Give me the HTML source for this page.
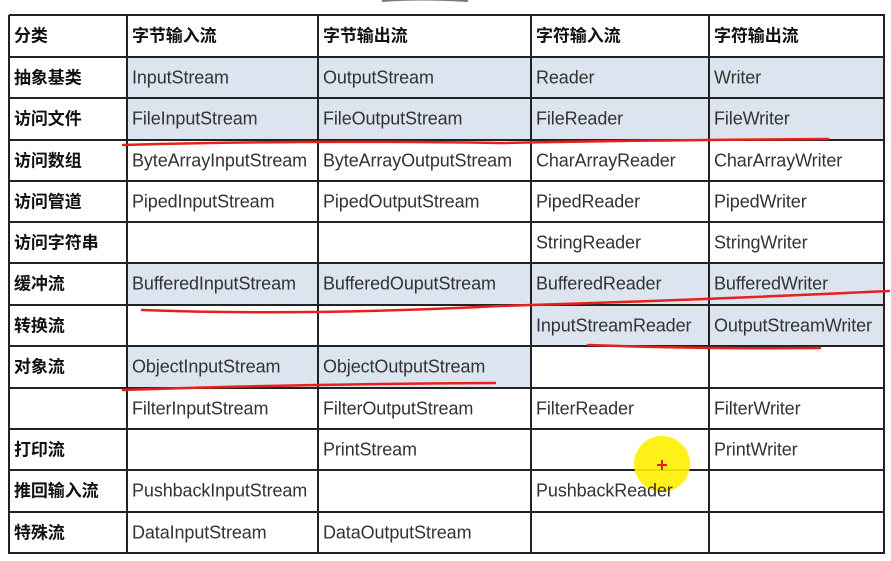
<!DOCTYPE html>
<html><head><meta charset="utf-8"><style>
body{margin:0;width:891px;height:561px;background:#fff;overflow:hidden;position:relative;font-family:"Liberation Sans","Noto Sans CJK SC",sans-serif;}
.c{position:absolute;box-sizing:border-box;font-size:18px;color:#333;padding-left:5px;white-space:nowrap;letter-spacing:-0.1px}
.c span{position:absolute;left:5px;top:50%;transform:translateY(-52%);line-height:20px}
.h{font-weight:bold;color:#111;font-size:17px}
.h span{transform:translateY(-48%)}
.b{background:#dce4ef}
.l{position:absolute;background:#222}
</style></head><body>
<div id="t"></div>
<svg style="position:absolute;left:0;top:0" width="891" height="561">
<path d="M382 1 Q420 -2 468 1" stroke="#777" stroke-width="2" fill="none"/>
</svg>
<script>
var xs=[9,127,318,531,709,884];
var ys=[15,57,98,140,181,222,263,305,346,388,429,470,512,553];
var data=[
["分类","字节输入流","字节输出流","字符输入流","字符输出流"],
["抽象基类","InputStream","OutputStream","Reader","Writer"],
["访问文件","FileInputStream","FileOutputStream","FileReader","FileWriter"],
["访问数组","ByteArrayInputStream","ByteArrayOutputStream","CharArrayReader","CharArrayWriter"],
["访问管道","PipedInputStream","PipedOutputStream","PipedReader","PipedWriter"],
["访问字符串","","","StringReader","StringWriter"],
["缓冲流","BufferedInputStream","BufferedOuputStream","BufferedReader","BufferedWriter"],
["转换流","","","InputStreamReader","OutputStreamWriter"],
["对象流","ObjectInputStream","ObjectOutputStream","",""],
["","FilterInputStream","FilterOutputStream","FilterReader","FilterWriter"],
["打印流","","PrintStream","","PrintWriter"],
["推回输入流","PushbackInputStream","","",""],
["特殊流","DataInputStream","DataOutputStream","",""]];
var blue={1:[1,2,3,4],2:[1,2,3,4],6:[1,2,3,4],7:[3,4],8:[1,2]};
var h="";
for(var r=0;r<13;r++)for(var c=0;c<5;c++){
 var cls="c";if(r==0||c==0)cls+=" h";if(blue[r]&&blue[r].indexOf(c)>=0)cls+=" b";
 h+='<div class="'+cls+'" style="left:'+xs[c]+'px;top:'+ys[r]+'px;width:'+(xs[c+1]-xs[c])+'px;height:'+(ys[r+1]-ys[r])+'px"><span>'+data[r][c]+'</span></div>';
}
for(var i=0;i<xs.length;i++)h+='<div class="l" style="left:'+(xs[i]-1)+'px;top:15px;width:2px;height:539px"></div>';
for(var j=0;j<ys.length;j++)h+='<div class="l" style="left:9px;top:'+(ys[j]-1)+'px;width:876px;height:2px"></div>';
document.getElementById("t").innerHTML=h;
</script>
<svg style="position:absolute;left:0;top:0" width="891" height="561">
<g stroke="#e8201a" stroke-width="2.5" fill="none" stroke-linecap="round">
<path d="M123 145 Q300 140 500 143 Q650 140 828 139"/>
<path d="M142 310 Q300 316 500 306 Q700 300 889 291"/>
<path d="M588 345 Q700 349 820 348"/>
<path d="M123 390 Q300 384 495 383"/>
</g>
<circle cx="662" cy="464" r="28" fill="#ffee00" opacity="0.9"/>
<path d="M657 465h10M662 460v10" stroke="#e02020" stroke-width="2"/>
</svg>
<div class="c" style="left:531px;top:470px;height:42px;width:178px"><span>PushbackReader</span></div>
</body></html>
